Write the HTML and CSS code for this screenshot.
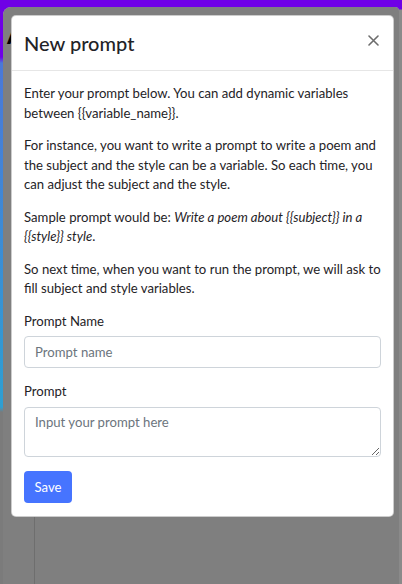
FILE: index.html
```html
<!DOCTYPE html>
<html lang="en">
<head>
<meta charset="utf-8">
<title>New prompt</title>
<link rel="stylesheet" href="styles.css">
</head>
<body>
<div class="topbar"></div>
<div class="main">
  <div class="edge"></div>
  <div class="page">
    <div class="page-head">
      <div class="page-title">A</div>
    </div>
    <div class="page-body">
      <div class="sidebar"></div>
      <div class="content"></div>
    </div>
    <div class="backdrop"></div>
    <div class="modal">
      <div class="modal-header">
        <h5 class="modal-title">New prompt</h5>
        <button class="close" type="button" aria-label="Close">
          <svg width="11" height="11" viewBox="0 0 11 11"><path d="M1 1L10 10M10 1L1 10" stroke="#6d6d6d" stroke-width="1.6" stroke-linecap="round"/></svg>
        </button>
      </div>
      <div class="modal-body">
        <p>Enter your prompt below. You can add dynamic variables<br>between {{variable_name}}.</p>
        <p>For instance, you want to write a prompt to write a poem and<br>the subject and the style can be a variable. So each time, you<br>can adjust the subject and the style.</p>
        <p>Sample prompt would be: <em>Write a poem about {{subject}} in a<br>{{style}} style</em>.</p>
        <p>So next time, when you want to run the prompt, we will ask to<br>fill subject and style variables.</p>
        <div class="field">
          <label class="label" for="pname">Prompt Name</label>
          <input class="input" id="pname" type="text" placeholder="Prompt name">
        </div>
        <div class="field">
          <label class="label" for="ptext">Prompt</label>
          <textarea class="input textarea" id="ptext" placeholder="Input your prompt here"></textarea>
        </div>
        <button class="btn" type="button">Save</button>
      </div>
    </div>
  </div>
  <div class="edge-right"></div>
</div>
</body>
</html>
```
FILE: styles.css
```css
* { box-sizing: border-box; }
html, body { margin: 0; padding: 0; }
body {
  width: 402px;
  height: 584px;
  overflow: hidden;
  background: #6f00e6;
  display: flex;
  flex-direction: column;
  font-family: Lato, "Open Sans", sans-serif;
  font-size: 13.15px;
  color: #1f2327;
}
.topbar { height: 7px; flex: none; }
.main { flex: 1; display: flex; min-height: 0; }
.edge {
  width: 3px;
  flex: none;
  background: linear-gradient(to bottom, #6f00e6 0, #6f00e6 50px, #4b78d8 56px, #2e9fd2 400px, #7b7b7b 405px, #7b7b7b 100%);
}
.edge-right {
  width: 3px;
  flex: none;
  background: linear-gradient(to bottom, #6f00e6 0, #6f00e6 2px, #8a8a8a 3px);
}
.page {
  flex: 1;
  position: relative;
  background: #fff;
  border-top-left-radius: 8px;
  border-top-right-radius: 4px;
  overflow: hidden;
  display: flex;
  flex-direction: column;
}
.page-head { height: 50px; padding: 14px 0 0 4px; }
.page-title { font-size: 26px; font-weight: 700; color: #000; line-height: 26px; }
.page-body { flex: 1; display: flex; }
.sidebar { width: 32px; border-right: 1px solid #dcdcdc; }
.content { flex: 1; }
.backdrop {
  position: absolute;
  inset: 0;
  background: rgba(0, 0, 0, 0.5);
}
.modal {
  position: absolute;
  left: 8px;
  top: 8px;
  width: 383px;
  background: #fff;
  border: 1px solid rgba(0, 0, 0, 0.2);
  border-radius: 5px;
}
.modal-header {
  display: flex;
  align-items: center;
  justify-content: space-between;
  padding: 12px 13px 12px 12px;
  border-bottom: 1px solid #e6e6e6;
  height: 55px;
}
.modal-title {
  margin: 0;
  font-size: 20px;
  font-weight: 500;
  line-height: 30px;
  color: #1f2327;
}
.close {
  align-self: flex-start;
  margin-top: 5px;
  border: 0;
  background: none;
  padding: 0;
  width: 14px;
  height: 14px;
  display: flex;
  align-items: center;
  justify-content: center;
  cursor: pointer;
}
.modal-body { padding: 13px 12px 13px 12px; }
.modal-body p { margin: 0 0 13px 0; line-height: 19.5px; white-space: nowrap; }
.field { margin-bottom: 14px; }
.label { display: block; line-height: 19.5px; margin: 0 0 5px 0; }
.input {
  display: block;
  width: 100%;
  height: 32px;
  padding: 5px 10px;
  font: inherit;
  color: #212529;
  border: 1px solid #ced4da;
  border-radius: 4px;
  background: #fff;
}
.input::placeholder { color: #6c757d; opacity: 1; }
.textarea { height: 50px; resize: vertical; line-height: 19.5px; }
.btn {
  display: block;
  height: 32px;
  width: 48px;
  padding: 0;
  border: 0;
  border-radius: 4px;
  background: #4674ff;
  color: #fff;
  font: inherit;
}
```
